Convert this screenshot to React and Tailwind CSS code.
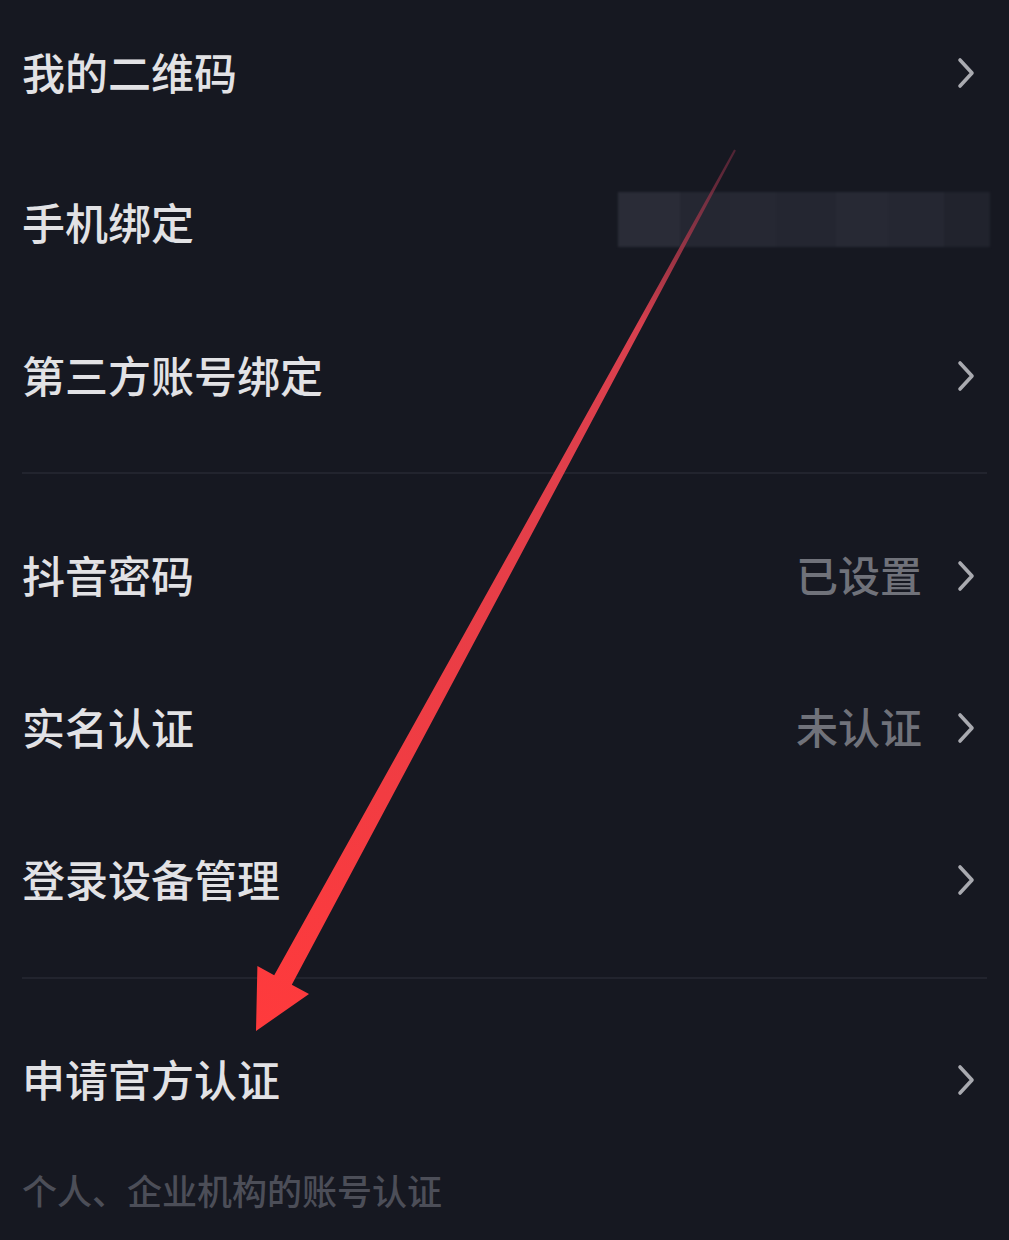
import { Fragment } from 'react'

const font = { fontFamily: '"Noto Sans CJK SC", "Noto Sans", sans-serif' }

function Chevron() {
  return (
    <svg width="22" height="34" viewBox="0 0 22 34" className="shrink-0">
      <path d="M5 4 L17 17 L5 30" fill="none" stroke="#a9aab0" strokeWidth="3.6" strokeLinecap="round" strokeLinejoin="round" />
    </svg>
  )
}

function Row({ label, value, height = 'h-[152px]', children, chevron = true }) {
  return (
    <div className={`flex ${height} items-center pl-[22px] pr-[32px]`}>
      <span className="mt-[-4px] text-[43px] font-medium leading-none text-[#e2e2e5]">{label}</span>
      <div className="ml-auto flex items-center gap-[33px]">
        {value ? <span className="mt-[-4px] text-[42px] font-medium leading-none text-[#70727a]">{value}</span> : null}
        {children}
        {chevron ? <Chevron /> : null}
      </div>
    </div>
  )
}

function Divider({ className }) {
  return <div className={`mx-[22px] h-[2px] bg-[#22242e] ${className}`} />
}

function BlurredPhone() {
  const blocks = [
    ['w-[62px]', 'bg-[#2a2c37]'],
    ['w-[50px]', 'bg-[#252732]'],
    ['w-[46px]', 'bg-[#262833]'],
    ['w-[60px]', 'bg-[#242631]'],
    ['w-[52px]', 'bg-[#272934]'],
    ['w-[56px]', 'bg-[#252732]'],
    ['w-[46px]', 'bg-[#21232d]'],
  ]
  return (
    <div className="mr-[-13px] mt-[-8px] flex h-[55px] w-[372px] blur-[1px]">
      {blocks.map(([w, bg], i) => (
        <div key={i} className={`${w} ${bg} h-full`} />
      ))}
    </div>
  )
}

function Arrow() {
  return (
    <svg className="pointer-events-none absolute left-0 top-0" width="1009" height="1240" viewBox="0 0 1009 1240">
      <defs>
        <linearGradient id="arrowFill" x1="735" y1="150" x2="257" y2="1030" gradientUnits="userSpaceOnUse">
          <stop offset="0" stopColor="#8a3048" stopOpacity="0.5" />
          <stop offset="0.2" stopColor="#d8404e" />
          <stop offset="1" stopColor="#ff3a3c" />
        </linearGradient>
      </defs>
      <polygon
        points="735.9,150.5 291.8,984.8 309,994 256,1031 257.4,966 274.2,975.2 734.1,149.5"
        fill="url(#arrowFill)"
      />
    </svg>
  )
}

export default function App() {
  return (
    <div className="relative min-h-[1240px] w-full overflow-hidden bg-[#161821]" style={font}>
      <Row label="我的二维码" height="h-[146px]" />
      <Row label="手机绑定" height="h-[154px]" chevron={false}>
        <BlurredPhone />
      </Row>
      <Row label="第三方账号绑定" />
      <Divider className="mt-[20px] mb-[26px]" />
      <Row label="抖音密码" value="已设置" />
      <Row label="实名认证" value="未认证" />
      <Row label="登录设备管理" />
      <Divider className="mt-[21px] mb-[25px]" />
      <Row label="申请官方认证" />
      <div className="mt-[14px] pl-[22px] text-[35px] font-medium leading-[40px] text-[#4c4e58]">
        个人、企业机构的账号认证
      </div>
      <Arrow />
    </div>
  )
}
